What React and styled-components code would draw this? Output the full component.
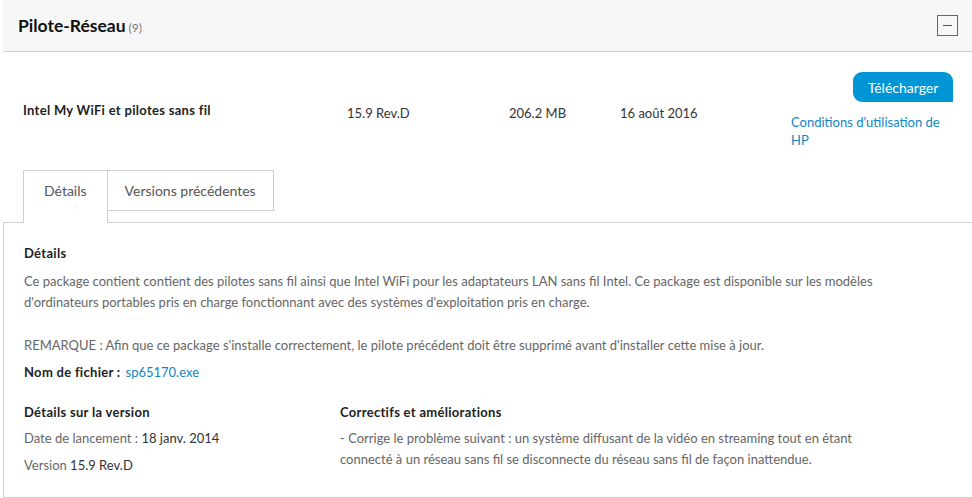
import React from 'react';
import styled, { createGlobalStyle } from 'styled-components';

const GlobalStyle = createGlobalStyle`
  body {
    margin: 0;
    background: #ffffff;
    font-family: Lato, "Liberation Sans", sans-serif;
    color: #333;
  }
`;

const Section = styled.section`
  margin-left: 3px;
  width: 969px;
`;

const Header = styled.header`
  height: 52px;
  background: #f7f7f7;
  border-bottom: 1px solid #cfcfcf;
  display: flex;
  align-items: center;
  justify-content: space-between;
  padding: 0 14px 0 15px;
  box-sizing: border-box;
`;

const Title = styled.h2`
  margin: 0;
  font-size: 17.5px;
  font-weight: 700;
  color: #111;
  span {
    font-size: 12px;
    font-weight: 400;
    color: #777;
    margin-left: 3px;
  }
`;

const Collapse = styled.button`
  width: 21px;
  height: 21px;
  padding: 0;
  background: transparent;
  border: 1px solid #666;
  display: flex;
  align-items: center;
  justify-content: center;
  cursor: pointer;
  &::before {
    content: '';
    width: 9px;
    height: 1px;
    background: #555;
  }
`;

const Row = styled.div`
  display: grid;
  grid-template-columns: 324px 162px 111px 171px 162px;
  padding: 20px 0 0 20px;
  font-size: 13px;
`;

const Name = styled.div`
  font-weight: 700;
  color: #222;
  line-height: 18px;
  letter-spacing: 0.3px;
  padding-top: 29px;
`;

const Cell = styled.div`
  color: #333;
  line-height: 18px;
  padding-top: 32px;
`;

const Actions = styled.div`
  display: flex;
  flex-direction: column;
  align-items: flex-end;
`;

const DownloadButton = styled.button`
  width: 100px;
  height: 30px;
  border: none;
  border-radius: 9px 9px 0 9px;
  background: #0096d6;
  color: #fff;
  font-family: inherit;
  font-size: 14px;
  cursor: pointer;
`;

const TermsLink = styled.a`
  align-self: stretch;
  margin-top: 11px;
  color: #0f86c4;
  font-size: 13px;
  line-height: 18px;
  text-decoration: none;
`;

const Tabs = styled.div`
  display: flex;
  align-items: flex-start;
  margin: 21px 0 -1px 20px;
  position: relative;
  z-index: 1;
`;

const Tab = styled.div`
  box-sizing: border-box;
  height: ${(p) => (p.$active ? '53px' : '41px')};
  padding: 0 ${(p) => (p.$active ? '20px' : '17px')};
  line-height: 39px;
  font-size: 14px;
  color: #555;
  background: #fff;
  border: 1px solid #cfcfcf;
  border-left: ${(p) => (p.$active ? '1px solid #cfcfcf' : 'none')};
  border-bottom: ${(p) => (p.$active ? 'none' : '1px solid #cfcfcf')};
  cursor: pointer;
`;

const Panel = styled.div`
  border-top: 1px solid #cfcfcf;
  border-left: 1px solid #cfcfcf;
  border-bottom: 1px solid #cfcfcf;
  padding: 20px 98px 21px 20px;
  font-size: 13px;
  line-height: 21px;
  color: #666;
`;

const Heading = styled.h3`
  margin: 0;
  font-size: 13px;
  font-weight: 700;
  color: #222;
  line-height: 21px;
  letter-spacing: 0.3px;
`;

const Text = styled.p`
  margin: ${(p) => p.$mt || 0}px 0 0;
`;

const FileLine = styled.div`
  margin-top: 6px;
  b {
    color: #222;
    letter-spacing: 0.3px;
  }
  a {
    color: #0f86c4;
    text-decoration: none;
    margin-left: 5px;
  }
`;

const Columns = styled.div`
  display: grid;
  grid-template-columns: 316px 1fr;
  margin-top: 19px;
`;

const Value = styled.span`
  color: #333;
`;

export default function App() {
  return (
    <>
      <GlobalStyle />
      <Section>
        <Header>
          <Title>
            Pilote-Réseau<span>(9)</span>
          </Title>
          <Collapse aria-label="Réduire" />
        </Header>

        <Row>
          <Name>Intel My WiFi et pilotes sans fil</Name>
          <Cell>15.9 Rev.D</Cell>
          <Cell>206.2 MB</Cell>
          <Cell>16 août 2016</Cell>
          <Actions>
            <DownloadButton>Télécharger</DownloadButton>
            <TermsLink href="#">Conditions d'utilisation de HP</TermsLink>
          </Actions>
        </Row>

        <Tabs>
          <Tab $active>Détails</Tab>
          <Tab>Versions précédentes</Tab>
        </Tabs>

        <Panel>
          <Heading>Détails</Heading>
          <Text $mt={7}>
            Ce package contient contient des pilotes sans fil ainsi que Intel WiFi pour les adaptateurs LAN sans fil Intel. Ce package est disponible sur les modèles d'ordinateurs portables pris en charge fonctionnant avec des systèmes d'exploitation pris en charge.
          </Text>
          <Text $mt={22}>
            REMARQUE : Afin que ce package s'installe correctement, le pilote précédent doit être supprimé avant d'installer cette mise à jour.
          </Text>
          <FileLine>
            <b>Nom de fichier :</b>
            <a href="#">sp65170.exe</a>
          </FileLine>
          <Columns>
            <div>
              <Heading>Détails sur la version</Heading>
              <Text $mt={5}>
                Date de lancement : <Value>18 janv. 2014</Value>
              </Text>
              <Text $mt={6}>
                Version <Value>15.9 Rev.D</Value>
              </Text>
            </div>
            <div>
              <Heading>Correctifs et améliorations</Heading>
              <Text $mt={5}>
                - Corrige le problème suivant : un système diffusant de la vidéo en streaming tout en étant
                <br />
                connecté à un réseau sans fil se disconnecte du réseau sans fil de façon inattendue.
              </Text>
            </div>
          </Columns>
        </Panel>
      </Section>
    </>
  );
}
